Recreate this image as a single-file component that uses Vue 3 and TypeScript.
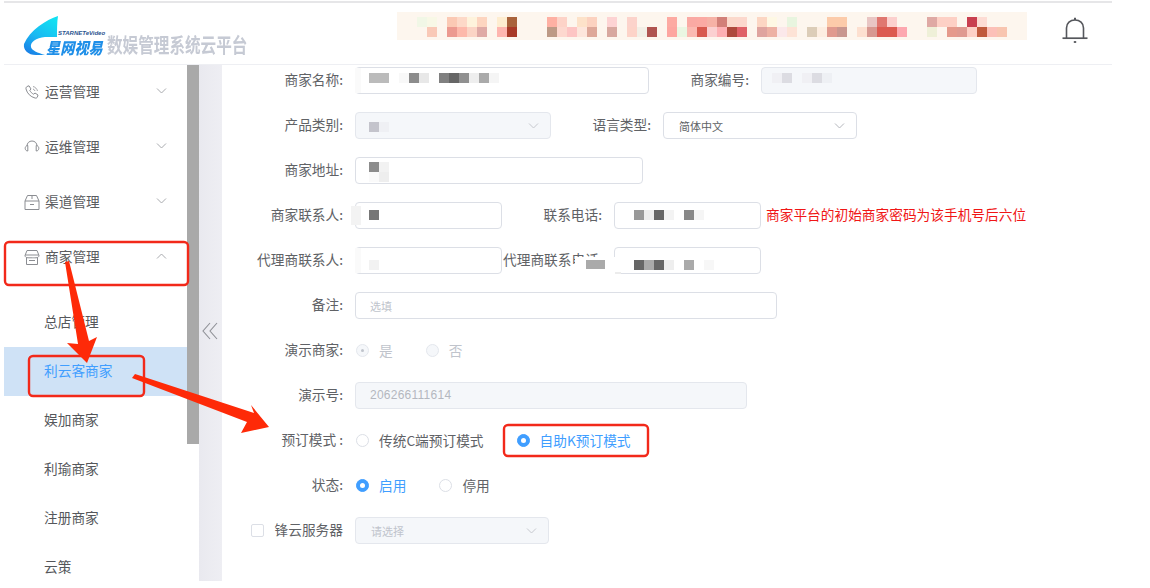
<script setup lang="ts">
type Cell = [number, number, string]
interface Patch { x: number; y: number; cells: Cell[] }

const line = (colors: string[], row = 0): Cell[] =>
  colors.map((c, i) => [i, row, c] as Cell).filter((c) => c[2] !== '')

const top: Record<number, string> = { 15: '#feb0a3', 16: '#fdd3c8', 18: '#fde2c9', 19: '#fcd2c0', 21: '#fdd3d3', 23: '#fcd3cb', 27: '#fdaaa2', 29: '#faa9a3', 30: '#fbaaa3', 31: '#f6b2a6', 32: '#d28078', 33: '#fbd9cb', 34: '#fcd8cd', 36: '#fcd6c3', 37: '#fef8e4', 39: '#e8f5df', 43: '#fccbaa', 44: '#fccbaa', 47: '#e9c6c4', 48: '#e07770', 49: '#fcd0ce', 53: '#dfa9a4', 54: '#fdd0c5', 55: '#fdd0c5', 57: '#c94050', 58: '#fddcd4', 5: '#fbc9b4', 6: '#fdd9c8', 7: '#fef3dc', 8: '#fdd5c0', 10: '#feedd0', 11: '#a9633c', 2: '#f1f7e6', 3: '#f8f8e6' }
const bottom: Record<number, string> = { 3: '#f9c9b7', 5: '#ec9a90', 6: '#fdb9ab', 7: '#fbd4c5', 8: '#dfaaa6', 10: '#feb6b0', 11: '#a93a28', 15: '#bd9a86', 16: '#fdd8cf', 17: '#fdc5c4', 18: '#fde6dc', 19: '#dea899', 21: '#d8a89f', 23: '#fdd3c8', 24: '#f2efe6', 25: '#b05450', 27: '#fda6a0', 28: '#eaf6e2', 29: '#fbb9b1', 30: '#d85a4e', 31: '#fbd0d0', 32: '#fdb0b3', 33: '#ae4a3c', 34: '#df6268', 36: '#dfa49f', 37: '#edb1a4', 38: '#fbe8ea', 39: '#fde3d6', 41: '#dccdb8', 42: '#fdeee1', 43: '#e09a8e', 44: '#c9978f', 46: '#fde0d0', 47: '#d89890', 48: '#dc5a50', 49: '#dc5a50', 50: '#fda8b0', 53: '#eff0d8', 55: '#e59a8c', 56: '#df9a90', 57: '#fdd0c5', 58: '#c05a3c', 59: '#fcc0b8', 60: '#f8c5b0' }
const bandCells: Cell[] = [
  ...Object.entries(top).map(([k, v]) => [Number(k), 0, v] as Cell),
  ...Object.entries(bottom).map(([k, v]) => [Number(k), 1, v] as Cell),
]

const patches: Record<string, Patch> = {
  name: { x: 13, y: 5, cells: line(['#bbb', '#bbb', '', '#f8f8f8', '#8c8c8c', '#e8e8e8', '', '#808080', '#666', '#909090', '#eee', '#aaa', '#f5f5f5']) },
  code: { x: 10, y: 5, cells: line(['#f0f0f4', '#dcdce2', '', '#f0f0f4', '#dcdce2', '#eef0f4']) },
  product: { x: 13, y: 9, cells: line(['#c4c4cc', '#eff0f4']) },
  address: { x: 13, y: 4, cells: [[0, 0, '#8c8c8c'], [1, 0, '#f2f2f2'], [0, 1, '#fafafa'], [1, 1, '#eee']] },
  contact: { x: 13, y: 7, cells: line(['#777']) },
  phone: { x: 19, y: 7, cells: line(['#999', '#eee', '#666', '#f3f3f3', '', '#888', '#f5f5f5']) },
  agent: { x: 13, y: 12, cells: line(['#f2f2f2']) },
  agentPhone: { x: 19, y: 12, cells: line(['#666', '#aaa', '#666', '#eee', '', '#aaa', '', '#f7f7f7']) },
}

const cellStyle = (c: Cell) => ({ gridColumn: c[0] + 1, gridRow: c[1] + 1, background: c[2] })
const patchStyle = (p: Patch) => ({ margin: `${p.y}px 0 0 ${p.x}px` })

const groups = [
  { title: '运营管理', icon: 'phone', open: false },
  { title: '运维管理', icon: 'headset', open: false },
  { title: '渠道管理', icon: 'box', open: false },
  { title: '商家管理', icon: 'store', open: true },
]
const subItems = ['总店管理', '利云客商家', '娱加商家', '利瑜商家', '注册商家', '云策']
</script>

<template>
  <div class="page">
    <header class="header">
      <div class="logo">
        <svg class="swoosh" viewBox="23 15 40 42" width="40" height="42">
          <defs>
            <linearGradient id="sw" x1="0.7" y1="0" x2="0.2" y2="1">
              <stop offset="0" stop-color="#12e0f2" />
              <stop offset="0.55" stop-color="#19b8f2" />
              <stop offset="1" stop-color="#1a7fe6" />
            </linearGradient>
          </defs>
          <path fill="url(#sw)" d="M58 16C46 20 30 30 24 44C23 50 28 55 36 55L45 55C38 53 31 50 31 47C30 42 36 38 45 37L57 37C57 30 57 22 58 16Z" />
        </svg>
        <span class="brand-en">STARNETeVideo</span>
        <span class="brand-cn">星网视易</span>
        <span class="brand-sub">数娱管理系统云平台</span>
      </div>
      <div class="band">
        <span v-for="(c, i) in bandCells" :key="i" :style="cellStyle(c)"></span>
      </div>
      <svg class="bell" viewBox="0 0 26 28" width="26" height="28" fill="none" stroke="#55575c" stroke-width="1.6">
        <path d="M4.5 21V11C4.5 6.2 8.2 3 13 3C17.8 3 21.5 6.2 21.5 11V21" />
        <path d="M0.5 21.2H25.5" stroke-width="1.7" />
        <path d="M13 0.8V3" stroke-width="2" />
        <path d="M11.8 25H14.2" stroke-width="1.8" />
      </svg>
    </header>

    <div class="body">
      <nav class="sidebar">
        <div v-for="g in groups" :key="g.title" class="group">
          <svg class="gicon" viewBox="0 0 16 16" width="16" height="16" fill="none" stroke="#8b8d92" stroke-width="1">
            <template v-if="g.icon === 'phone'">
              <path d="M3 2.5L5 1.8L7 5L5.8 6.3C6.5 8 8 9.5 9.7 10.2L11 9L14 11L13.4 13C13 14 12 14.3 11 14C6.5 12.8 3.2 9.5 2 5C1.8 4 2.2 3 3 2.5Z" />
              <path d="M9 2.5C11.2 3 13 4.8 13.5 7M9 5C10 5.3 10.7 6 11 7" stroke-width="0.8" />
            </template>
            <template v-else-if="g.icon === 'headset'">
              <path d="M3 7C3 4 5.2 2 8 2C10.8 2 13 4 13 7" />
              <path d="M3.5 6.5C2 6.8 1.2 8 1.2 9.3C1.2 10.8 2.2 12 3.8 12L3.8 6.5ZM12.2 6.5L12.2 12C13.8 12 14.8 10.8 14.8 9.3C14.8 8 14 6.8 12.5 6.5" />
            </template>
            <template v-else-if="g.icon === 'box'">
              <path d="M1 7H15V15.5H1ZM1 7L3.5 1.5H12.5L15 7" />
              <path d="M6 10.5H10M8 1.5V5" />
            </template>
            <template v-else>
              <path d="M3 1.5H13L15 6.5C15 8 13.5 8.8 12 8.8C10.5 8.8 8 8.8 8 8.8H4C2.5 8.8 1 8 1 6.5Z" />
              <path d="M2.5 9V15.5H13.5V9M1 6H15M5 11.5H11" />
            </template>
          </svg>
          <span class="gtitle">{{ g.title }}</span>
          <svg class="gchev" :class="{ up: g.open }" viewBox="0 0 11 6" width="11" height="6" fill="none" stroke="#a8aaae">
            <path d="M1 0.5L5.5 5L10 0.5" />
          </svg>
        </div>
        <ul class="subs">
          <li v-for="s in subItems" :key="s" :class="{ active: s === '利云客商家' }">{{ s }}</li>
        </ul>
      </nav>
      <div class="scrollbar"><div class="thumb"></div></div>
      <div class="collapse">
        <svg viewBox="0 0 16 18" width="16" height="18" fill="none" stroke="#8f9197" stroke-width="1.1">
          <path d="M8 1L1 9L8 17M15 1L8 9L15 17" />
        </svg>
      </div>

      <main class="form">
        <div class="row">
          <label class="lab">商家名称:</label>
          <div class="input w294">
            <div class="mosaic" :style="patchStyle(patches.name)"><span v-for="(c, i) in patches.name.cells" :key="i" :style="cellStyle(c)"></span></div>
            <i class="smear"></i>
          </div>
          <label class="lab2">商家编号:</label>
          <div class="input off w216">
            <div class="mosaic" :style="patchStyle(patches.code)"><span v-for="(c, i) in patches.code.cells" :key="i" :style="cellStyle(c)"></span></div>
          </div>
        </div>

        <div class="row">
          <label class="lab">产品类别:</label>
          <div class="input off w196">
            <div class="mosaic" :style="patchStyle(patches.product)"><span v-for="(c, i) in patches.product.cells" :key="i" :style="cellStyle(c)"></span></div>
            <svg class="chev" viewBox="0 0 11 6" width="11" height="6" fill="none" stroke="#c6c8ce"><path d="M1 0.5L5.5 5L10 0.5" /></svg>
          </div>
          <label class="lab2">语言类型:</label>
          <div class="input w194">
            <span class="val">简体中文</span>
            <svg class="chev" viewBox="0 0 11 6" width="11" height="6" fill="none" stroke="#b4b6bc"><path d="M1 0.5L5.5 5L10 0.5" /></svg>
          </div>
        </div>

        <div class="row">
          <label class="lab">商家地址:</label>
          <div class="input w288">
            <div class="mosaic" :style="patchStyle(patches.address)"><span v-for="(c, i) in patches.address.cells" :key="i" :style="cellStyle(c)"></span></div>
          </div>
        </div>

        <div class="row">
          <label class="lab">商家联系人:</label>
          <div class="input w147">
            <div class="mosaic" :style="patchStyle(patches.contact)"><span v-for="(c, i) in patches.contact.cells" :key="i" :style="cellStyle(c)"></span></div>
            <i class="smear wide"></i>
          </div>
          <label class="lab3">联系电话:</label>
          <div class="input w147">
            <div class="mosaic" :style="patchStyle(patches.phone)"><span v-for="(c, i) in patches.phone.cells" :key="i" :style="cellStyle(c)"></span></div>
          </div>
          <span class="hint">商家平台的初始商家密码为该手机号后六位</span>
        </div>

        <div class="row">
          <label class="lab">代理商联系人:</label>
          <div class="input w147">
            <div class="mosaic" :style="patchStyle(patches.agent)"><span v-for="(c, i) in patches.agent.cells" :key="i" :style="cellStyle(c)"></span></div>
            <i class="smear"></i>
          </div>
          <label class="lab3 clip">代理商联系电话:</label>
          <div class="input w147">
            <div class="mosaic" :style="patchStyle(patches.agentPhone)"><span v-for="(c, i) in patches.agentPhone.cells" :key="i" :style="cellStyle(c)"></span></div>
            <i class="cover"></i>
          </div>
        </div>

        <div class="row">
          <label class="lab">备注:</label>
          <div class="input w422"><span class="ph">选填</span></div>
        </div>

        <div class="row">
          <label class="lab">演示商家:</label>
          <div class="radios gap-small">
            <span class="radio"><i class="dot dis on"></i><em class="muted">是</em></span>
            <span class="radio"><i class="dot dis"></i><em class="muted">否</em></span>
          </div>
        </div>

        <div class="row">
          <label class="lab">演示号:</label>
          <div class="input off w392"><span class="num">206266111614</span></div>
        </div>

        <div class="row">
          <label class="lab">预订模式 :</label>
          <div class="radios gap-mode">
            <span class="radio"><i class="dot"></i><em>传统C端预订模式</em></span>
            <span class="radio"><i class="dot sel"></i><em class="blue">自助K预订模式</em></span>
          </div>
        </div>

        <div class="row">
          <label class="lab">状态:</label>
          <div class="radios gap-state">
            <span class="radio"><i class="dot sel"></i><em class="blue">启用</em></span>
            <span class="radio"><i class="dot"></i><em>停用</em></span>
          </div>
        </div>

        <div class="row">
          <label class="lab check"><i class="box"></i><span>锋云服务器</span></label>
          <div class="input off w194">
            <span class="ph wide">请选择</span>
            <svg class="chev" viewBox="0 0 11 6" width="11" height="6" fill="none" stroke="#c6c8ce"><path d="M1 0.5L5.5 5L10 0.5" /></svg>
          </div>
        </div>
      </main>
    </div>

    <svg class="marks" viewBox="0 0 1150 581" width="1150" height="581">
      <g fill="none" stroke="#f2291a" stroke-width="2.4">
        <rect x="5" y="242" width="183" height="43" rx="4" />
        <rect x="29" y="356" width="115" height="40" rx="4" />
        <rect x="504" y="425" width="144" height="31" rx="4" />
      </g>
      <g fill="#fe2a08">
        <polygon points="65,262 69,261 89,341 97,337 87,363 67,343 78,344" />
        <polygon points="132,378 135,374 254,413 251,405 269,427 241,433 247,422" />
      </g>
    </svg>
  </div>
</template>

<style scoped>
.page {
  position: relative;
  width: 1150px;
  height: 588px;
  padding-top: 1px;
  box-sizing: border-box;
  background: #fff;
  overflow: hidden;
  font-family: "Noto Sans CJK SC", "Liberation Sans", sans-serif;
  font-size: 13.7px;
  color: #606266;
}
.header {
  display: flex;
  align-items: flex-start;
  width: 1108px;
  height: 64px;
  margin-left: 4px;
  box-sizing: border-box;
  border-top: 2px solid #e6e6e8;
  border-bottom: 1px solid #eeeff3;
}
.logo {
  position: relative;
  flex: none;
  width: 393px;
  height: 60px;
}
.swoosh {
  position: absolute;
  left: 19px;
  top: 12px;
}
.brand-en {
  position: absolute;
  left: 54px;
  top: 26px;
  font: italic 700 6px/9px "Liberation Sans", sans-serif;
  color: #2c5590;
  white-space: nowrap;
}
.brand-cn {
  position: absolute;
  left: 42px;
  top: 35px;
  font-size: 14.2px;
  line-height: 18px;
  font-weight: 900;
  font-style: italic;
  color: #1f8fe8;
  white-space: nowrap;
  text-shadow: 0 0 1px #fff;
  transform: scaleY(1.12);
}
.brand-sub {
  position: absolute;
  left: 103px;
  top: 30px;
  font-size: 15.6px;
  line-height: 22px;
  font-weight: 700;
  color: #c6cad4;
  white-space: nowrap;
  filter: blur(0.5px);
  transform: scaleY(1.3);
}
.band {
  flex: none;
  display: grid;
  grid-auto-columns: 10px;
  grid-auto-rows: 10px;
  align-content: start;
  width: 630px;
  height: 28px;
  box-sizing: border-box;
  margin-top: 9px;
  padding-top: 5px;
  background: #fdf6ee;
}
.bell {
  flex: none;
  margin: 14px 0 0 35px;
}
.body {
  display: flex;
  height: 516px;
  margin-left: 4px;
}
.sidebar {
  flex: none;
  width: 183px;
  overflow: hidden;
}
.group {
  display: flex;
  align-items: center;
  height: 55px;
  padding: 0 20px;
  box-sizing: border-box;
}
.gicon {
  flex: none;
  margin: 0 5px 2px 0;
}
.gtitle {
  flex: 1;
  padding-bottom: 4px;
  color: #5a5c60;
}
.gchev {
  flex: none;
  margin-bottom: 4px;
}
.gchev.up {
  transform: rotate(180deg);
}
.subs {
  list-style: none;
  margin: 0;
  padding: 13px 0 0;
}
.subs li {
  height: 49px;
  line-height: 47px;
  padding-left: 40px;
  color: #55575b;
}
.subs li.active {
  background: #cfe2f6;
  color: #409eff;
}
.scrollbar {
  flex: none;
  width: 12px;
  background: #fff;
}
.thumb {
  height: 379px;
  background: #a9a9a9;
}
.collapse {
  flex: none;
  width: 23px;
  display: flex;
  align-items: flex-start;
  justify-content: center;
  padding: 257px 1px 0 0;
  box-sizing: border-box;
  background: linear-gradient(90deg, #e9e9ef, #eeeef3);
}
.form {
  flex: 1;
  display: flex;
  flex-direction: column;
  gap: 18px;
  padding-top: 2px;
}
.row {
  display: flex;
  align-items: center;
  height: 27px;
  flex: none;
}
.lab {
  flex: none;
  width: 121px;
  margin-right: 12px;
  padding-bottom: 3px;
  text-align: right;
  white-space: nowrap;
}
.lab2 {
  flex: none;
  width: 100px;
  margin-right: 12px;
  padding-bottom: 3px;
  text-align: right;
  white-space: nowrap;
}
.lab3 {
  flex: none;
  width: 100px;
  margin-right: 12px;
  padding-bottom: 3px;
  text-align: right;
  white-space: nowrap;
}
.lab3.clip {
  text-align: left;
  margin-left: 1px;
  width: 99px;
}
.check {
  display: flex;
  justify-content: space-between;
  align-items: center;
  padding-left: 29px;
  width: 92px;
}
.box {
  width: 13px;
  height: 13px;
  margin-top: 2px;
  box-sizing: border-box;
  border: 1px solid #dcdfe6;
  border-radius: 2px;
}
.input {
  position: relative;
  flex: none;
  display: flex;
  align-items: flex-start;
  height: 27px;
  box-sizing: border-box;
  border: 1px solid #dcdfe6;
  border-radius: 4px;
  background: #fff;
}
.input.off {
  background: #f5f7fa;
  border-color: #e4e7ed;
}
.w147 { width: 147px; }
.w194 { width: 194px; }
.w196 { width: 196px; }
.w216 { width: 216px; }
.w288 { width: 288px; }
.w294 { width: 294px; }
.w392 { width: 392px; }
.w422 { width: 422px; }
.mosaic {
  display: grid;
  grid-auto-columns: 10px;
  grid-auto-rows: 10px;
}
.smear {
  position: absolute;
  left: -1px;
  top: 0;
  width: 6px;
  height: 25px;
  background: #fafafa;
}
.smear.wide {
  left: -5px;
  top: 3px;
  width: 10px;
  height: 19px;
  background: #f3f3f3;
}
.cover {
  position: absolute;
  left: -40px;
  top: 9px;
  width: 46px;
  height: 17px;
  background:
    linear-gradient(#aaa, #aaa) 11px 3px / 19px 9px no-repeat,
    linear-gradient(#ececec, #ececec) 40px 15px / 6px 2px no-repeat,
    #fff;
}
.chev {
  position: absolute;
  right: 11px;
  top: 10px;
}
.val {
  margin: 5px 0 0 15px;
  font-size: 11px;
  line-height: 16px;
  color: #606266;
}
.ph {
  margin: 5px 0 0 14px;
  font-size: 11px;
  line-height: 16px;
  color: #c0c4cc;
}
.ph.wide {
  margin-left: 15px;
}
.num {
  margin: 4px 0 0 14px;
  font: 12px/17px "Liberation Sans", sans-serif;
  letter-spacing: 0.25px;
  color: #b4b7bf;
}
.hint {
  margin-left: 5px;
  padding-bottom: 3px;
  font-size: 13.7px;
  color: #f01616;
  white-space: nowrap;
}
.radios {
  display: flex;
  align-items: center;
  padding-left: 1px;
}
.gap-small { gap: 33px; }
.gap-mode { gap: 33px; }
.gap-state { gap: 33px; }
.radio {
  display: flex;
  align-items: center;
  gap: 10px;
}
.radio em {
  padding-bottom: 2px;
  font-style: normal;
  white-space: nowrap;
}
.radio em.blue {
  color: #409eff;
}
.radio em.muted {
  color: #c0c4cc;
}
.dot {
  flex: none;
  display: flex;
  align-items: center;
  justify-content: center;
  width: 13px;
  height: 13px;
  box-sizing: border-box;
  border: 1px solid #dcdfe6;
  border-radius: 50%;
  background: #fff;
}
.dot.dis {
  background: #f5f7fa;
  border-color: #e4e7ed;
}
.dot.sel {
  background: #409eff;
  border-color: #409eff;
}
.dot.sel::after {
  content: "";
  width: 5px;
  height: 5px;
  border-radius: 50%;
  background: #fff;
}
.dot.on::after {
  content: "";
  width: 3px;
  height: 3px;
  border-radius: 50%;
  background: #c0c4cc;
}
.marks {
  position: absolute;
  left: 0;
  top: 0;
  pointer-events: none;
}
</style>
